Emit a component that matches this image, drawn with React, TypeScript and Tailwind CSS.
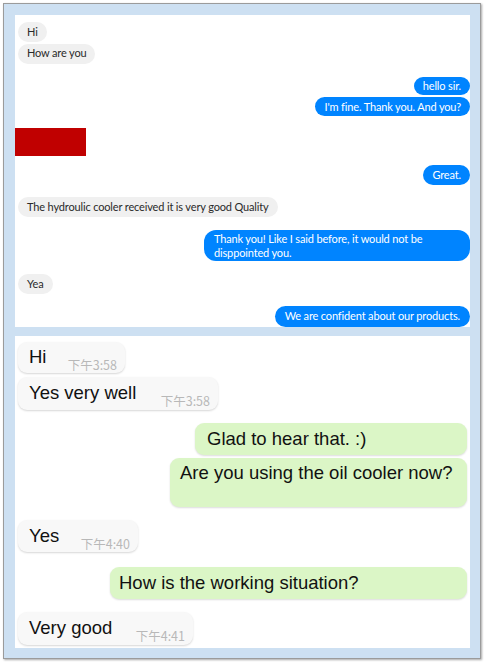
import React from "react";

const topFont = { fontFamily: 'Lato, "Open Sans", sans-serif' };
const botFont = { fontFamily: '"Liberation Sans", Arial, sans-serif' };
const tsFont = { fontFamily: '"Noto Sans CJK SC", "Liberation Sans", sans-serif' };

function Gray({ children, cls }: { children: React.ReactNode; cls: string }) {
  return (
    <div className={`self-start ml-[3px] h-[20px] flex items-center rounded-full bg-[#f0f0f0] px-[9px] text-[#2a2a2a] whitespace-nowrap ${cls}`}>
      {children}
    </div>
  );
}

function Blue({ children, cls }: { children: React.ReactNode; cls: string }) {
  return (
    <div className={`self-end h-[19px] flex items-center rounded-full bg-[#0084ff] px-[9px] text-white whitespace-nowrap ${cls}`}>
      {children}
    </div>
  );
}

function TopPanel() {
  return (
    <div className="w-[455px] h-[312px] shrink-0 bg-white overflow-hidden flex flex-col text-[11px] tracking-[-0.15px]" style={topFont}>
      <Gray cls="mt-[7px]">Hi</Gray>
      <Gray cls="mt-[2px]">How are you</Gray>
      <Blue cls="mt-[13px]">hello sir.</Blue>
      <Blue cls="mt-[2px]">I'm fine. Thank you. And you?</Blue>
      <div className="self-start mt-[12px] w-[71px] h-[28px] bg-[#c00000]" />
      <Blue cls="mt-[9px] h-[20px]">Great.</Blue>
      <Gray cls="mt-[12px]">The hydroulic cooler received it is very good Quality</Gray>
      <div className="self-end mt-[13px] w-[266px] h-[32px] rounded-[12px] bg-[#0084ff] text-white px-[10px] flex flex-col justify-center leading-[14px]">
        <span>Thank you! Like I said before, it would not be</span>
        <span>disppointed you.</span>
      </div>
      <Gray cls="mt-[13px]">Yea</Gray>
      <Blue cls="mt-[12px] h-[21px] px-[10px]">We are confident about our products.</Blue>
    </div>
  );
}

function In({ text, time, w, h, cls }: { text: string; time: string; w: string; h: string; cls: string }) {
  return (
    <div className={`self-start ml-[3px] ${w} ${h} ${cls} flex items-center rounded-[9px] bg-[#f8f8f8] shadow-[0_1px_2px_rgba(0,0,0,0.16)] pl-[11px] pr-[8px]`}>
      <span className="text-[18.5px] text-[#111] leading-none whitespace-nowrap">{text}</span>
      <span className="ml-auto pt-[16px] text-[12.5px] text-[#b8b8b8] leading-none whitespace-nowrap" style={tsFont}>
        {time}
      </span>
    </div>
  );
}

function Out({ text, w, h, cls, pl }: { text: string; w: string; h: string; cls: string; pl: string }) {
  return (
    <div className={`self-end mr-[3px] ${w} ${h} ${cls} ${pl} flex rounded-[9px] bg-[#dbf6c6] shadow-[0_1px_2px_rgba(0,0,0,0.14)]`}>
      <span className="text-[18.5px] text-[#111] leading-none whitespace-nowrap">{text}</span>
    </div>
  );
}

function BottomPanel() {
  return (
    <div className="w-[455px] h-[312px] shrink-0 bg-white overflow-hidden flex flex-col" style={botFont}>
      <In text="Hi" time="下午3:58" w="w-[107px]" h="h-[31px]" cls="mt-[6px]" />
      <In text="Yes very well" time="下午3:58" w="w-[200px]" h="h-[33px]" cls="mt-[4px]" />
      <Out text="Glad to hear that. :)" w="w-[272px]" h="h-[32px]" cls="mt-[13px] items-center" pl="pl-[12px]" />
      <Out text="Are you using the oil cooler now?" w="w-[297px]" h="h-[49px]" cls="mt-[3px] items-start pt-[6px]" pl="pl-[10px]" />
      <In text="Yes" time="下午4:40" w="w-[120px]" h="h-[32px]" cls="mt-[13px]" />
      <Out text="How is the working situation?" w="w-[357px]" h="h-[32px]" cls="mt-[15px] items-center" pl="pl-[9px]" />
      <In text="Very good" time="下午4:41" w="w-[175px]" h="h-[33px]" cls="mt-[13px]" />
    </div>
  );
}

export default function App() {
  return (
    <div className="w-[484px] h-[664px] bg-white p-[3px]">
      <div className="w-[478px] h-[656px] border border-[#9b9b9b] bg-[#cde0f2] pl-[11px] pt-[11px] pr-[10px] pb-[10px] flex flex-col gap-[9px] shadow-[1px_1px_2px_rgba(0,0,0,0.35)]">
        <TopPanel />
        <BottomPanel />
      </div>
    </div>
  );
}
